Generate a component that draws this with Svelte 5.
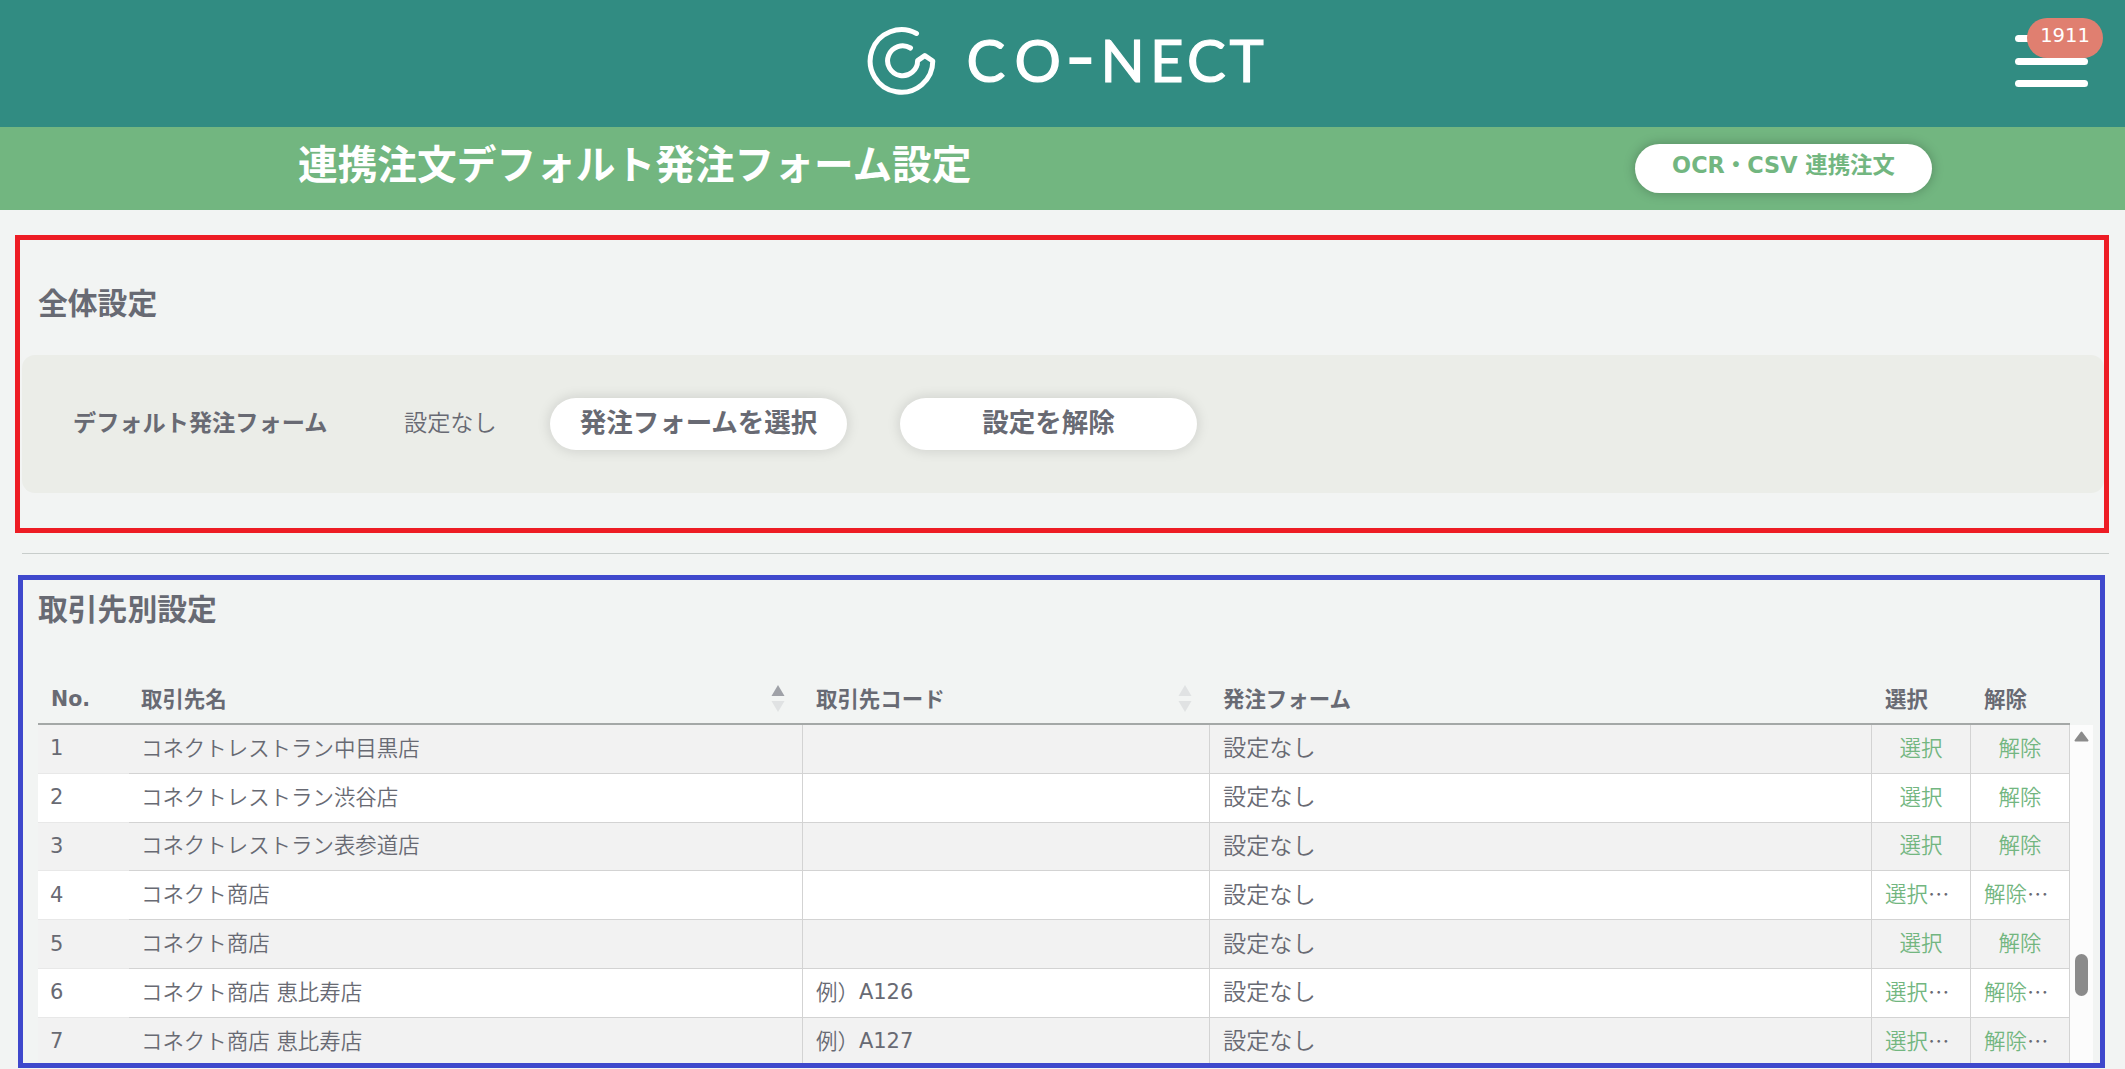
<!-- DEFAULT ORDER FORM SETTINGS -->
<script>
    // Rows of the client table
    const clients = [
        { no: 1, name: "コネクトレストラン中目黒店",   code: "",     more: false },
        { no: 2, name: "コネクトレストラン渋谷店",     code: "",     more: false },
        { no: 3, name: "コネクトレストラン表参道店",   code: "",     more: false },
        { no: 4, name: "コネクト商店",                 code: "",     more: true },
        { no: 5, name: "コネクト商店",                 code: "",     more: false },
        { no: 6, name: "コネクト商店 恵比寿店",        code: "A126", more: true },
        { no: 7, name: "コネクト商店 恵比寿店",        code: "A127", more: true },
    ];

    const actions = ["選択", "解除"];
    const unread = 1911;
</script>

{#snippet sorter(up)}
    <svg class="sorter" class:up width="14" height="28" viewBox="0 0 14 28">
        <path class="asc" d="M7 0 L13.5 11 H0.5 Z" />
        <path class="desc" d="M7 27 L13.5 16 H0.5 Z" />
    </svg>
{/snippet}

<div class="page">
    <header class="header">
        <svg class="logo" width="420" height="120" viewBox="0 -20 420 120">
            <path
                class="mark"
                d="M49.5 13.5 A31.3 31.3 0 1 0 65.8 41 L57.8 35.6 L50.6 40.6 A15 15 0 1 1 43.5 28"
            />
            <text class="wordmark" y="61.5" x="99.5 147.5">CO<tspan class="dash" x="197" y="67">-</tspan><tspan x="233.5 283 320 362.5" y="61.5">NECT</tspan></text>
        </svg>
        <button class="menu" aria-label="メニュー">
            <span class="bar"></span>
            <span class="bar"></span>
            <span class="bar"></span>
            <span class="badge">{unread}</span>
        </button>
    </header>

    <div class="titlebar">
        <h1>連携注文デフォルト発注フォーム設定</h1>
        <button class="pill pill-green"><span>OCR・CSV 連携注文</span></button>
    </div>

    <section class="box box-red">
        <h2>全体設定</h2>
        <div class="panel">
            <strong class="label">デフォルト発注フォーム</strong>
            <span class="current">設定なし</span>
            <button class="pill"><span>発注フォームを選択</span></button>
            <button class="pill"><span>設定を解除</span></button>
        </div>
    </section>

    <hr />

    <section class="box box-blue">
        <h2>取引先別設定</h2>
        <div class="row head">
            <div class="cell"><span class="latin">No.</span></div>
            <div class="cell">取引先名{@render sorter(true)}</div>
            <div class="cell">取引先コード{@render sorter(false)}</div>
            <div class="cell">発注フォーム</div>
            {#each actions as action}
                <div class="cell">{action}</div>
            {/each}
        </div>
        <div class="scroller">
            <div class="rows">
                {#each clients as client}
                    <div class="row">
                        <div class="cell no"><span class="latin">{client.no}</span></div>
                        <div class="cell">{client.name}</div>
                        <div class="cell">
                            {#if client.code}例）<span class="latin">{client.code}</span>{/if}
                        </div>
                        <div class="cell form">設定なし</div>
                        {#each actions as action}
                            <div class="cell action" class:more={client.more}>
                                <a href="#top">{action}</a>{#if client.more}…{/if}
                            </div>
                        {/each}
                    </div>
                {/each}
            </div>
            <div class="scrollbar">
                <svg width="15" height="11" viewBox="0 0 15 11">
                    <path d="M7.5 1.5 L13.5 9.5 H1.5 Z" />
                </svg>
                <div class="thumb"></div>
            </div>
        </div>
    </section>
</div>

<style>
    :global(body) {
        overflow: hidden;
    }

    .page {
        box-sizing: border-box;
        height: 1069px;
        overflow: hidden;
        background: #f2f4f3;
        color: #686a73;
        font-family: "Noto Sans CJK JP", sans-serif;
        font-size: 21.45px;
        line-height: 30px;
    }
    .page :global(*) {
        box-sizing: border-box;
    }

    h1,
    h2 {
        margin: 0;
        font-weight: 700;
        white-space: nowrap;
    }
    button {
        border: 0;
        padding: 0;
        background: none;
        font-family: inherit;
        color: inherit;
    }
    .latin {
        padding-top: 2px;
        font-family: "DejaVu Sans", sans-serif;
        font-size: 21px;
        font-weight: 400;
    }

    /* Header */
    .header {
        display: flex;
        justify-content: space-between;
        height: 127px;
        padding: 0 37px 0 867px;
        background: #318c82;
    }
    .mark {
        fill: none;
        stroke: #fff;
        stroke-width: 5;
        stroke-linecap: round;
        stroke-linejoin: round;
    }
    .wordmark {
        font-family: Lato, sans-serif;
        font-size: 58px;
        fill: #fff;
        stroke: #fff;
        stroke-width: 1.2;
    }
    .dash {
        font-size: 88px;
        stroke-width: 0;
    }
    .menu {
        position: relative;
        display: flex;
        flex-direction: column;
        gap: 15.5px;
        width: 73px;
        height: 53px;
        margin-top: 35px;
    }
    .bar {
        width: 73px;
        height: 7px;
        border-radius: 3.5px;
        background: #fff;
    }
    .badge {
        position: absolute;
        top: -17px;
        left: 12px;
        width: 76px;
        height: 40px;
        border-radius: 20px;
        background: #e07f70;
        color: #fff;
        font-family: "DejaVu Sans", sans-serif;
        font-size: 19.5px;
        line-height: 35px;
        text-align: center;
    }

    /* Title bar */
    .titlebar {
        display: flex;
        justify-content: space-between;
        height: 83px;
        padding: 17px 193px 0 298px;
        background: #72b680;
    }
    h1 {
        color: #fff;
        font-size: 39.7px;
        line-height: 36px;
    }

    .pill {
        flex: none;
        width: 297px;
        height: 52px;
        border-radius: 26px;
        background: #fff;
        box-shadow: 0 0 14px rgba(0, 0, 0, 0.14);
        font-size: 26.5px;
        font-weight: 700;
        line-height: 48px;
    }
    .pill span {
        display: block;
        margin-top: -6px;
    }
    .pill-green {
        height: 49px;
        box-shadow: 0 0 12px rgba(0, 0, 0, 0.26);
        color: #72b680;
        font-family: "DejaVu Sans", "Noto Sans CJK JP", sans-serif;
        font-size: 22.4px;
        line-height: 47px;
    }

    /* Framed sections */
    .box {
        border: 5px solid;
    }
    .box-red {
        height: 298px;
        margin: 25px 16px 0 15px;
        border-color: #ed1c24;
    }
    .box-blue {
        height: 493px;
        margin: 0 20px 0 18px;
        border-color: #3f48cc;
    }
    h2 {
        font-size: 29.8px;
        line-height: 40px;
    }
    .box-red h2 {
        padding: 41px 0 2px 18px;
    }
    .box-blue h2 {
        padding: 7px 0 2px 15px;
    }
    hr {
        height: 1px;
        margin: 20px 16px 21px 22px;
        border: 0;
        background: #c8cdcb;
    }

    .panel {
        display: flex;
        align-items: center;
        height: 138px;
        margin: 32px 0 0 2px;
        padding-left: 51px;
        border-radius: 13px;
        background: #ebede8;
    }
    .label {
        width: 331px;
        margin-top: -6px;
        font-size: 23.2px;
    }
    .current {
        width: 146px;
        margin-top: -6px;
        font-size: 23.2px;
        font-weight: 350;
    }
    .panel .pill + .pill {
        margin-left: 53px;
    }

    /* Table */
    .row {
        display: grid;
        grid-template-columns: 91px 674px 407px 662px 99px 99px;
        width: 2032px;
        height: 48.8px;
    }
    .cell {
        display: flex;
        align-items: center;
        min-width: 0;
        padding: 0 12px 4px 13px;
        white-space: pre;
        word-spacing: 2px;
        font-weight: 350;
    }
    .cell:nth-child(2) {
        padding-left: 12px;
    }
    .head {
        height: 60px;
        margin: 36px 0 0 15px;
        border-bottom: 2px solid #a4a8a7;
    }
    .head .cell {
        padding-top: 11px;
        font-weight: 700;
    }
    .head .latin {
        font-size: 20.5px;
        font-weight: 700;
    }
    .sorter {
        flex: none;
        margin: 2px 6px 0 auto;
    }
    .sorter path {
        fill: #e0e2e3;
    }
    .sorter.up .asc {
        fill: #9fa1a7;
    }

    .scroller {
        display: flex;
        height: 338px;
        margin-left: 15px;
        overflow: hidden;
    }
    .rows {
        width: 2032px;
    }
    .rows .row {
        background: #f2f2f2;
    }
    .rows .row:nth-child(even) {
        background: #fff;
    }
    .rows .cell {
        border-bottom: 1px solid #d3d3d3;
        border-right: 1px solid #d3d3d3;
    }
    .rows .no {
        padding: 0 0 3px 12px;
        border-right: 0;
        border-color: #e8e8e8;
    }
    .rows .form {
        padding-bottom: 5px;
        font-size: 23.2px;
    }
    .rows .action {
        justify-content: center;
        padding-right: 13px;
    }
    .rows .more {
        justify-content: flex-start;
    }
    a {
        color: #72b680;
        text-decoration: none;
    }

    .scrollbar {
        width: 23px;
        padding: 6px 0 0 4px;
        background: #fcfcfc;
    }
    .scrollbar svg {
        display: block;
    }
    .scrollbar path {
        fill: #8b8b8b;
        stroke: #8b8b8b;
        stroke-width: 2;
        stroke-linejoin: round;
    }
    .thumb {
        width: 13px;
        height: 42px;
        margin: 212px 0 0 1px;
        border-radius: 6.5px;
        background: #8b8b8b;
    }
</style>
